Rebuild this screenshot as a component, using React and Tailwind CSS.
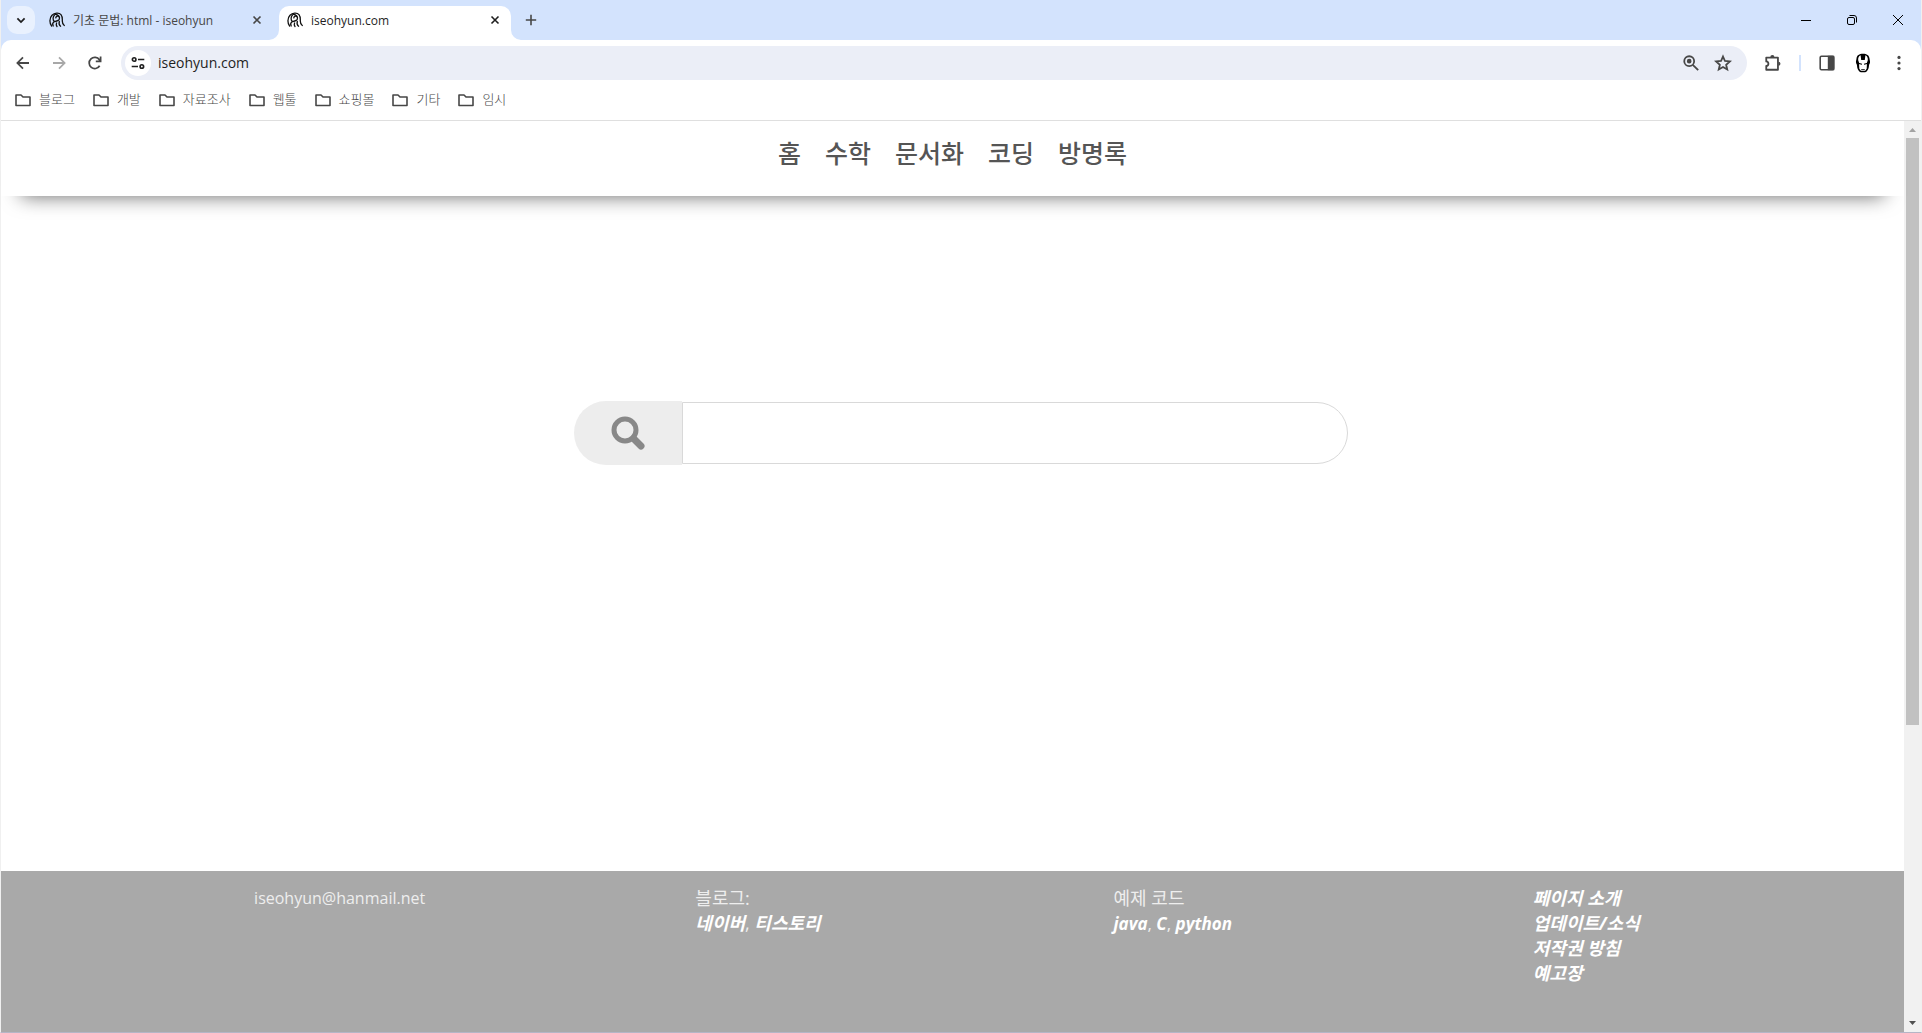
const UI = "font-['Open_Sans','Noto_Sans_CJK_KR',sans-serif]";

function Favicon() {
  return (
    <svg viewBox="0 0 16 16" className="size-4 shrink-0" fill="none" stroke="#111" strokeWidth="1.300" strokeLinecap="round" aria-hidden="true">
      <path d="M2.600 14C.4 11.500.2 6 3 3.200 5.500.6 10 .3 12 2.600c1.500 1.800 1.400 4.500 1.300 6.400 0 1.800.5 3.500 2 4.500" />
      <path d="M5.500 3C3.600 5 3.800 8 5.200 9.300M6.200 2.200C9 3 11.300 4.500 10.300 7.300 9.500 9.300 6.500 9 4.800 10c-1.200.8-1.300 2.500-.6 4" />
      <path d="M6.800 5.800c.3-1.800 2-2.300 3-1.300M7.600 11c-.5 1-.4 2.500.4 3.500M10.300 9.500c-.5 1.800-.1 3.700 1.300 4.700" />
    </svg>
  );
}

function Cross({ className }) {
  return (
    <svg viewBox="0 0 16 16" className={className} fill="none" stroke="currentColor" strokeWidth="1.600" aria-hidden="true">
      <path d="M4.500 4.500l7 7M11.500 4.500l-7 7" />
    </svg>
  );
}

function IconButton({ label, className = "", children }) {
  return (
    <button type="button" aria-label={label} className={`flex size-7 shrink-0 items-center justify-center text-[#474747] ${className}`}>
      {children}
    </button>
  );
}

function Glyph({ children, className = "size-5", sw = "1.8" }) {
  return (
    <svg viewBox="0 0 20 20" className={className} fill="none" stroke="currentColor" strokeWidth={sw} aria-hidden="true">
      {children}
    </svg>
  );
}

function TabCurve({ flip }) {
  return (
    <svg viewBox="0 0 10 10" className={flip ? "absolute bottom-0 -right-[10px] size-[10px] -scale-x-100" : "absolute bottom-0 -left-[10px] size-[10px]"} aria-hidden="true">
      <path d="M10 0v10H0A10 10 0 0 0 10 0z" fill="#fff" />
    </svg>
  );
}

function TabStrip() {
  return (
    <div className="flex h-10 items-end bg-[#d3e3fd]">
      <div className="flex h-[34px] min-w-0 flex-1 items-start">
        <button type="button" aria-label="탭 검색" className="ml-1.5 flex size-7 shrink-0 items-center justify-center rounded-[10px] bg-[#e9f1fe] text-[#1f1f1f]">
          <Glyph className="size-4" sw="2.200"><path d="M5.500 8l4.500 4.500L14.500 8" /></Glyph>
        </button>
        <div className="ml-[14px] flex h-7 w-[230px] items-center text-xs text-[#474747]">
          <Favicon />
          <span className="ml-2 flex-1 truncate pt-0.5">기초 문법: html - iseohyun</span>
          <button type="button" aria-label="탭 닫기" className="mr-3.5"><Cross className="size-4" /></button>
        </div>
        <div className="relative flex h-[34px] w-[232px] items-start rounded-t-[10px] bg-white px-2 text-xs text-[#1f1f1f]">
          <TabCurve />
          <div className="flex h-7 flex-1 items-center">
            <Favicon />
            <span className="ml-2 flex-1 truncate pt-0.5">iseohyun.com</span>
            <button type="button" aria-label="탭 닫기"><Cross className="size-4" /></button>
          </div>
          <TabCurve flip />
        </div>
        <IconButton label="새 탭" className="ml-1.5">
          <Glyph className="size-4" sw="2"><path d="M10 3.500v13M3.500 10h13" /></Glyph>
        </IconButton>
      </div>
      <div className="flex h-10 items-center text-black">
        <button type="button" aria-label="최소화" className="flex h-full w-[46px] items-center justify-center">
          <svg viewBox="0 0 12 12" className="size-3" stroke="currentColor"><path d="M1 6.500h10" /></svg>
        </button>
        <button type="button" aria-label="이전 크기로 복원" className="flex h-full w-[46px] items-center justify-center">
          <svg viewBox="0 0 12 12" className="size-3" fill="none" stroke="currentColor"><rect x="1.500" y="3.500" width="7" height="7" rx="1.500" /><path d="M3.500 1.500h4.500a2.500 2.500 0 0 1 2.500 2.500v4.500" /></svg>
        </button>
        <button type="button" aria-label="닫기" className="flex h-full w-[46px] items-center justify-center">
          <svg viewBox="0 0 12 12" className="size-3" fill="none" stroke="currentColor"><path d="M1 1l10 10M11 1L1 11" /></svg>
        </button>
      </div>
    </div>
  );
}

function Toolbar() {
  return (
    <div className="flex h-[46px] items-center rounded-t-[10px] bg-white pr-2">
      <div className="flex items-center gap-2 pl-2">
        <IconButton label="뒤로"><Glyph className="size-4" sw="2.200"><path d="M17.500 10H3.500M10 3l-7 7 7 7" /></Glyph></IconButton>
        <IconButton label="앞으로" className="text-[#a8a8a8]"><Glyph className="size-4" sw="2.200"><path d="M2.500 10h14M10 3l7 7-7 7" /></Glyph></IconButton>
        <IconButton label="새로고침"><Glyph className="size-4" sw="2.200"><path d="M15.800 13.500A7 7 0 1 1 15.500 6L17 7.500M17 2v6h-6" /></Glyph></IconButton>
      </div>
      <div className="ml-3 flex h-[34px] min-w-0 flex-1 items-center rounded-full bg-[#ebeef7] pl-1 pr-2.5">
        <button type="button" aria-label="사이트 정보" className="flex size-[26px] shrink-0 items-center justify-center rounded-full bg-white text-[#1f1f1f]">
          <Glyph className="size-[14px]" sw="2.400"><circle cx="4.500" cy="5" r="2.500" /><path d="M10 5h9M1 15h9" /><circle cx="15.500" cy="15" r="2.500" /></Glyph>
        </button>
        <input aria-label="주소창" defaultValue="iseohyun.com" className="ml-[7px] min-w-0 flex-1 bg-transparent text-sm text-[#1f1f1f] outline-none" />
        <div className="flex gap-1">
          <IconButton label="확대/축소"><Glyph className="size-[18px]" sw="2"><circle cx="8" cy="8" r="5.500" /><path d="M12 12l6 6" /><circle cx="8" cy="8" r="1.600" fill="currentColor" /></Glyph></IconButton>
          <IconButton label="북마크에 추가"><Glyph className="size-[18px]" sw="2"><path d="M10 2.800l2.200 5 5.400.500-4.100 3.600 1.200 5.300-4.700-2.800-4.700 2.800 1.200-5.300L2.400 8.300l5.400-.5z" /></Glyph></IconButton>
        </div>
      </div>
      <div className="ml-3 flex items-center">
        <IconButton label="확장 프로그램"><Glyph className="size-[18px]" sw="2"><path d="M2.500 4h13v13.500h-13v-4.200c3.200-.3 3.200-4.800 0-5.100z" strokeLinejoin="round" /><path d="M7 3.500a2.300 2.300 0 0 1 4.600 0zM16 8.500a2.300 2.300 0 0 1 0 4.600z" fill="currentColor" stroke="none" /></Glyph></IconButton>
        <span className="mx-3 h-4 w-0.5 bg-[#d3e3fd]" />
        <IconButton label="측면 패널"><Glyph className="size-4" sw="2"><rect x="1.500" y="1.500" width="17" height="17" rx="1.500" /><path d="M12 2h6v16h-6z" fill="currentColor" /></Glyph></IconButton>
        <IconButton label="프로필" className="ml-2">
          <svg viewBox="0 0 16 20" className="h-5 w-4" aria-hidden="true">
            <path d="M8 .7C4.200.7 1.800 2.200 1.500 5.500 1.400 7 .8 8 1 9.600c.1 1.200.9 1.600 1 2.800.2 2.800.9 4.600 2.400 6 1.500 1.200 5.700 1.200 7.200 0 1.500-1.400 2.200-3.200 2.400-6 .1-1.200.9-1.600 1-2.800.2-1.600-.4-2.600-.5-4.100C14.200 2.200 11.800.7 8 .7z" fill="#000" />
            <path d="M5.600 2.200C3.700 3 3 4.800 3.200 7.300L4 9.500l.3 6.300 1.500 2h4.400l1.500-2 .3-6.300.8-2.200c.2-2.500-.5-4.300-2.400-5.100L9.800 7H6.200z" fill="#fff" />
            <path d="M3.500 9.800l3.500 1v.9l-3.300-.6zM12.500 9.800l-3.500 1v.9l3.300-.6zM6.200 16h3.600v.8H6.200z" fill="#000" />
          </svg>
        </IconButton>
        <IconButton label="메뉴" className="ml-2"><Glyph className="size-4" sw="0"><g fill="currentColor"><circle cx="10" cy="3" r="2" /><circle cx="10" cy="10" r="2" /><circle cx="10" cy="17" r="2" /></g></Glyph></IconButton>
      </div>
    </div>
  );
}

function Bookmarks() {
  const folders = ["블로그", "개발", "자료조사", "웹툴", "쇼핑몰", "기타", "임시"];
  return (
    <div className="flex h-[35px] items-start gap-[18px] border-b border-[#dfdfdf] bg-white pl-[14px] pt-1">
      {folders.map((name) => (
        <button type="button" key={name} className="flex h-5 items-center gap-2 text-[13px] font-light text-[#474747]">
          <svg viewBox="0 0 16 16" className="size-4" fill="none" stroke="#474747" strokeWidth="1.600" strokeLinejoin="round" aria-hidden="true">
            <path d="M1 13V3h5l2 2h7v8.500H1z" />
          </svg>
          {name}
        </button>
      ))}
    </div>
  );
}

function SiteNav() {
  return (
    <header className="relative h-[75px] bg-white shadow-[0_20px_20px_-20px_rgba(0,0,0,0.600)]">
      <nav className="flex justify-center gap-6 pt-3 text-[25px] leading-10 font-medium text-[#555]">
        {["홈", "수학", "문서화", "코딩", "방명록"].map((t) => <a key={t} href="#">{t}</a>)}
      </nav>
    </header>
  );
}

function Search() {
  return (
    <form className="mx-auto flex w-[774px] max-w-full items-center">
      <button type="submit" aria-label="검색" className="flex h-16 w-[108px] items-center justify-center rounded-l-full bg-[#ededed]">
        <svg viewBox="0 0 34 34" className="size-[34px]" fill="none" stroke="#888" aria-hidden="true">
          <circle cx="14" cy="14" r="11" strokeWidth="5" />
          <path d="M22.500 22.500l7.500 7.500" strokeWidth="7" strokeLinecap="round" />
        </svg>
      </button>
      <input type="text" aria-label="검색어" className="h-[62px] min-w-0 flex-1 rounded-r-full border border-[#d9d9d9] px-4 text-xl outline-none" />
    </form>
  );
}

function Link({ children }) {
  return <a href="#" className="font-bold italic text-white">{children}</a>;
}

function Footer() {
  return (
    <footer className="grid h-[161px] grid-cols-[441fr_418fr_419fr_371fr] bg-[#a9a9a9] pt-[15px] pl-[13.3%] text-lg leading-[25px] text-[#eee]">
      <div className="text-base leading-[25px]">iseohyun@hanmail.net</div>
      <div>블로그:<br /><Link>네이버</Link>, <Link>티스토리</Link></div>
      <div>예제 코드<div className="text-[17px] leading-[25px]"><Link>java</Link>, <Link>C</Link>, <Link>python</Link></div></div>
      <div className="flex flex-col items-start">
        <Link>페이지 소개</Link><Link>업데이트/소식</Link><Link>저작권 방침</Link><Link>예고장</Link>
      </div>
    </footer>
  );
}

function Scrollbar() {
  return (
    <div className="flex w-[17px] shrink-0 flex-col items-center bg-[#f1f1f1]" aria-hidden="true">
      <svg viewBox="0 0 17 17" className="h-[17px] w-[17px] shrink-0"><path d="M5 11l3.500-4 3.500 4z" fill="#a3a3a3" /></svg>
      <div className="w-[13px] flex-[587] bg-[#c1c1c1]" />
      <div className="flex-[290]" />
      <svg viewBox="0 0 17 17" className="h-[17px] w-[17px] shrink-0"><path d="M5 6l3.500 4L12 6z" fill="#505050" /></svg>
    </div>
  );
}

export default function App() {
  return (
    <div className={`flex min-h-screen flex-col border-x border-b border-x-[#f0f0f0] border-b-[#b5b5c6] bg-white ${UI}`}>
      <div className="bg-[#d3e3fd]">
        <TabStrip />
        <Toolbar />
        <Bookmarks />
      </div>
      <div className="flex flex-1">
        <div className="flex min-w-0 flex-1 flex-col">
          <SiteNav />
          <main className="flex-1 pt-[205px] pl-4"><Search /></main>
          <Footer />
        </div>
        <Scrollbar />
      </div>
    </div>
  );
}
